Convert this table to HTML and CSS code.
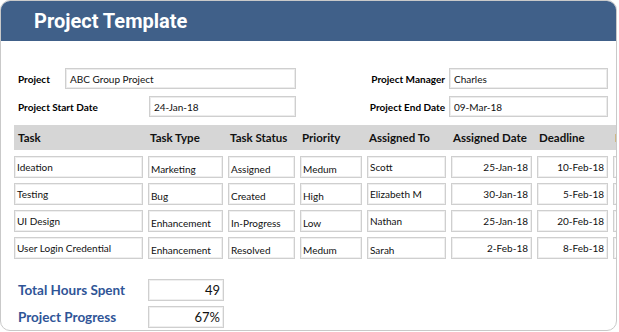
FILE: index.html
```html
<!DOCTYPE html>
<html>
<head>
<meta charset="utf-8">
<link rel="stylesheet" href="styles.css">
</head>
<body>
<div class="card">
  <div class="banner"><h1 class="title">Project Template</h1></div>
  <div class="info">
    <div class="info-left">
      <div class="info-row">
        <span class="lbl">Project</span>
        <div class="field field-wide">ABC Group Project</div>
      </div>
      <div class="info-row">
        <span class="lbl">Project Start Date</span>
        <div class="field field-mid">24-Jan-18</div>
      </div>
    </div>
    <div class="info-right">
      <span class="lbl rlbl">Project Manager</span>
      <div class="field field-r">Charles</div>
      <span class="lbl rlbl">Project End Date</span>
      <div class="field field-r">09-Mar-18</div>
    </div>
  </div>
  <div class="table">
    <div class="thead">
      <div class="th th-first">Task</div>
      <div class="th">Task Type</div>
      <div class="th">Task Status</div>
      <div class="th">Priority</div>
      <div class="th">Assigned To</div>
      <div class="th">Assigned Date</div>
      <div class="th">Deadline</div>
      <div class="th">Hours</div>
    </div>
    <div class="trow">
      <div class="td td-task">Ideation</div>
      <div class="td">Marketing</div>
      <div class="td">Assigned</div>
      <div class="td">Medum</div>
      <div class="td td-mid">Scott</div>
      <div class="td td-num">25-Jan-18</div>
      <div class="td td-num">10-Feb-18</div>
      <div class="td"></div>
    </div>
    <div class="trow">
      <div class="td td-task">Testing</div>
      <div class="td">Bug</div>
      <div class="td">Created</div>
      <div class="td">High</div>
      <div class="td td-mid">Elizabeth M</div>
      <div class="td td-num">30-Jan-18</div>
      <div class="td td-num">5-Feb-18</div>
      <div class="td"></div>
    </div>
    <div class="trow">
      <div class="td td-task">UI Design</div>
      <div class="td">Enhancement</div>
      <div class="td">In-Progress</div>
      <div class="td">Low</div>
      <div class="td td-mid">Nathan</div>
      <div class="td td-num">25-Jan-18</div>
      <div class="td td-num">20-Feb-18</div>
      <div class="td"></div>
    </div>
    <div class="trow">
      <div class="td td-task">User Login Credential</div>
      <div class="td">Enhancement</div>
      <div class="td">Resolved</div>
      <div class="td">Medum</div>
      <div class="td">Sarah</div>
      <div class="td td-num">2-Feb-18</div>
      <div class="td td-num">8-Feb-18</div>
      <div class="td"></div>
    </div>
  </div>
  <div class="summary">
    <div class="sum-row">
      <span class="sum-lbl">Total Hours Spent</span>
      <div class="sum-val">49</div>
    </div>
    <div class="sum-row">
      <span class="sum-lbl">Project Progress</span>
      <div class="sum-val">67%</div>
    </div>
  </div>
</div>
</body>
</html>
```

FILE: styles.css
```css
* { box-sizing: border-box; }
html, body { margin: 0; padding: 0; background: #fff; }
body { font-family: Lato, "Open Sans", sans-serif; color: #111; }

.card {
  width: 617px;
  height: 331px;
  border: 1px solid #c9c9c9;
  border-radius: 10px;
  overflow: hidden;
  background: #fff;
}

.banner {
  height: 40px;
  background: #406089;
  display: flex;
  align-items: center;
  padding-left: 33px;
}
.title {
  margin: 0;
  font-family: Roboto, sans-serif;
  font-weight: 700;
  font-size: 20px;
  color: #fff;
}

.info {
  display: flex;
  padding: 27px 0 0 17px;
  height: 84px;
}
.info-left {
  width: 278px;
  display: flex;
  flex-direction: column;
  gap: 7px;
}
.info-row {
  display: flex;
  justify-content: space-between;
  align-items: center;
  height: 21px;
}
.lbl {
  font-weight: 700;
  font-size: 10px;
  color: #000;
}
.field {
  height: 21px;
  border: 1px solid #cfcfcf;
  box-shadow: inset 0 0 0 1px #ececec;
  font-size: 10px;
  display: flex;
  align-items: center;
  padding-left: 4px;
  color: #111;
}
.field-wide { width: 231px; }
.field-mid { width: 147px; }

.info-right {
  margin-left: auto;
  margin-right: 8px;
  display: grid;
  grid-template-columns: auto 159px;
  grid-auto-rows: 21px;
  column-gap: 4px;
  row-gap: 7px;
  align-items: center;
}
.rlbl { text-align: right; }

.table {
  margin-left: 13px;
  display: flex;
  flex-direction: column;
  gap: 5px;
}
.thead {
  display: grid;
  grid-template-columns: 129px 75px 67px 62px 79px 81px 71px 60px;
  column-gap: 5px;
  height: 25px;
  background: #d6d6d6;
  align-items: center;
  margin-bottom: 1px;
}
.th {
  font-weight: 700;
  font-size: 11.5px;
  color: #111;
  padding-left: 2px;
  white-space: nowrap;
}
.th-first { padding-left: 4px; }

.trow {
  display: grid;
  grid-template-columns: 129px 75px 67px 62px 79px 81px 71px 60px;
  column-gap: 5px;
  height: 22px;
}
.td {
  border: 1px solid #cfcfcf;
  box-shadow: inset 0 0 0 1px #efefef;
  font-size: 10px;
  display: flex;
  align-items: flex-end;
  padding: 0 3px 2px 2px;
  white-space: nowrap;
  overflow: hidden;
}
.td-task { align-items: center; padding-bottom: 1px; }
.td-mid { align-items: center; padding-bottom: 0; }
.td-num { justify-content: flex-end; align-items: center; padding-bottom: 0; }

.summary {
  margin: 20px 0 0 17px;
  display: flex;
  flex-direction: column;
  gap: 5px;
}
.sum-row {
  display: flex;
  align-items: center;
  height: 22px;
}
.sum-lbl {
  width: 130px;
  font-weight: 700;
  font-size: 13.5px;
  color: #2f5597;
}
.sum-val {
  width: 76px;
  height: 22px;
  border: 1px solid #cfcfcf;
  box-shadow: inset 0 0 0 1px #efefef;
  font-size: 13px;
  display: flex;
  align-items: center;
  justify-content: flex-end;
  padding-right: 3px;
  color: #111;
}
```
